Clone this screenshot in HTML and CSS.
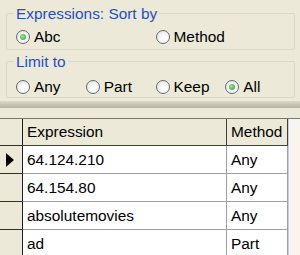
FILE: index.html
```html
<!DOCTYPE html>
<html lang="en">
<head>
    <meta charset="UTF-8">
    <title>Expressions</title>
    <link rel="stylesheet" href="styles.css">
</head>
<body>
    <div class="panel">
        <div class="group">
            <div class="legend">Expressions: Sort by</div>
            <div class="options sort">
                <span class="radio checked"><span class="mark"></span>Abc</span>
                <span class="radio"><span class="mark"></span>Method</span>
            </div>
        </div>
        <div class="group">
            <div class="legend">Limit to</div>
            <div class="options limit">
                <span class="radio"><span class="mark"></span>Any</span>
                <span class="radio"><span class="mark"></span>Part</span>
                <span class="radio"><span class="mark"></span>Keep</span>
                <span class="radio checked"><span class="mark"></span>All</span>
            </div>
        </div>
    </div>
    <div class="splitter"></div>

    <div class="grid-wrap">
        <table class="grid">
            <tr class="head">
                <th class="rowhead"></th>
                <th class="expr">Expression</th>
                <th class="meth">Method</th>
            </tr>
            <tr>
                <td class="rowhead"><span class="current"></span></td>
                <td>64.124.210</td>
                <td>Any</td>
            </tr>
            <tr>
                <td class="rowhead"></td>
                <td>64.154.80</td>
                <td>Any</td>
            </tr>
            <tr>
                <td class="rowhead"></td>
                <td>absolutemovies</td>
                <td>Any</td>
            </tr>
            <tr>
                <td class="rowhead"></td>
                <td>ad</td>
                <td>Part</td>
            </tr>
        </table>
        <div class="scroll"></div>
    </div>
</body>
</html>
```

FILE: styles.css
```css
body {
    margin: 0;
    background-color: #ece9d8;
    font-family: "Liberation Sans", Arial, sans-serif;
    font-size: 15.4px;
    color: #000;
    overflow: hidden;
}
.panel {
    padding: 5px 5px 0 6px;
}
.group {
    position: relative;
    height: 48px;
}
.group::before {
    content: "";
    position: absolute;
    left: 0;
    right: 0;
    top: 8px;
    bottom: 3px;
    border: 1px solid #dbd8c8;
    border-radius: 2px;
    z-index: -1;
}
.legend {
    color: #1f4fc8;
    line-height: 17px;
    height: 17px;
    background-color: #ece9d8;
    display: inline-block;
    margin-left: 8px;
    padding: 0 2px;
}
.options {
    display: flex;
    padding-left: 10px;
    margin-top: 5px;
}
.limit {
    margin-top: 7px;
}
.radio {
    display: flex;
    align-items: center;
    height: 18px;
}
.sort .radio {
    width: 147px;
}
.limit .radio {
    width: 74px;
}
.mark {
    width: 12px;
    height: 12px;
    border: 1px solid #5f6b74;
    border-radius: 50%;
    margin-right: 4px;
    background: radial-gradient(circle at 62% 62%, #ffffff 25%, #dcdad0 100%);
    display: flex;
    align-items: center;
    justify-content: center;
}
.checked .mark::after {
    content: "";
    width: 6px;
    height: 6px;
    border-radius: 50%;
    background: radial-gradient(circle at 40% 40%, #9be49b, #2f9a2f);
}
.splitter {
    height: 7px;
    background: linear-gradient(#dcd9ca, #b5b2a4);
}
.grid-wrap {
    display: flex;
    margin-top: 10px;
    border-top: 1px solid #7a786c;
}
.grid {
    border-collapse: collapse;
    width: 288px;
    table-layout: fixed;
}
.grid th {
    background-color: #ece9d8;
    font-weight: normal;
    text-align: left;
    height: 26px;
    padding: 0 0 0 4px;
    border-right: 1px solid #404040;
    border-bottom: 1px solid #404040;
}
.grid td {
    background-color: #fff;
    height: 27px;
    padding: 0 0 0 4px;
    border-right: 1px solid #a0a0a0;
    border-bottom: 1px solid #a0a0a0;
}
.grid .rowhead {
    width: 22px;
    background-color: #ece9d8;
    border-right: 1px solid #202020;
    border-bottom: 1px solid #303030;
    padding: 0;
}
.grid .meth {
    width: 56px;
}
.current {
    display: block;
    width: 0;
    height: 0;
    margin-left: 6px;
    border-top: 7px solid transparent;
    border-bottom: 7px solid transparent;
    border-left: 8px solid #000;
}
.scroll {
    flex: 1;
    border-left: 1px solid #c7cfdc;
    background-color: #f6f5f0;
}
```
